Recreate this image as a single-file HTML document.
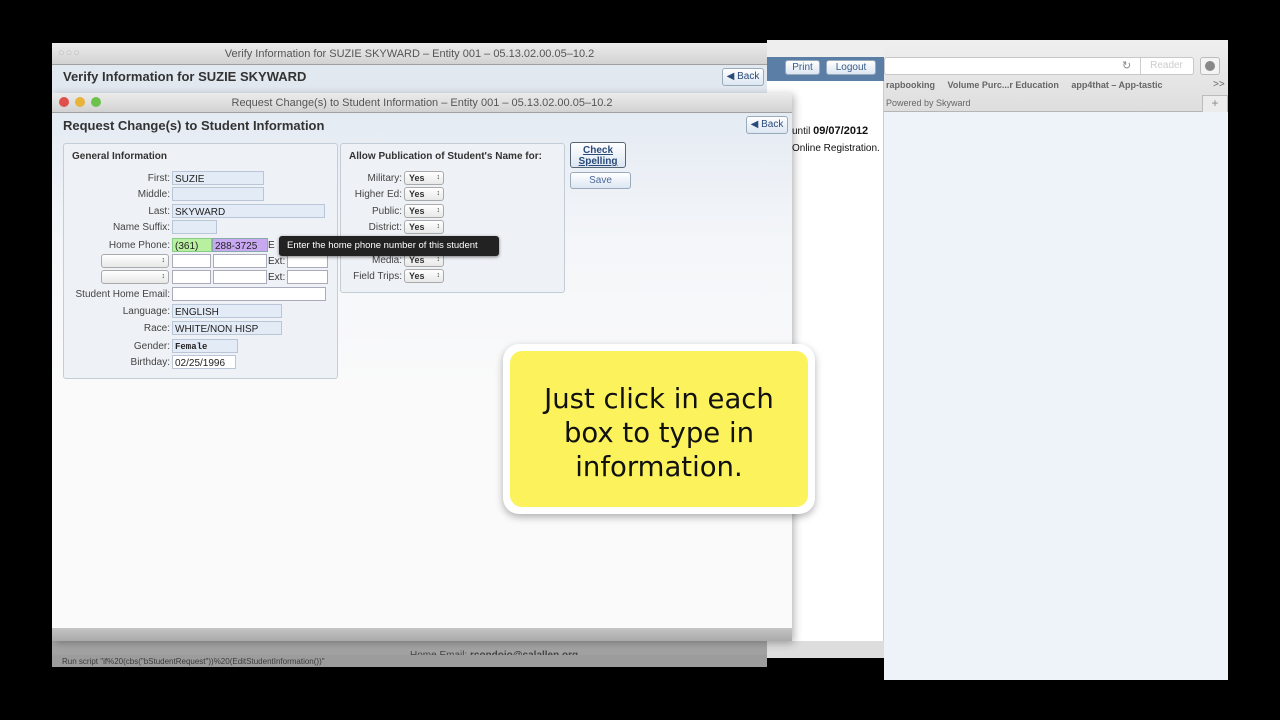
<!DOCTYPE html>
<html><head><meta charset="utf-8"><style>
*{margin:0;padding:0;box-sizing:border-box}
body{width:1280px;height:720px;background:#000;position:relative;overflow:hidden;font-family:"Liberation Sans",sans-serif;font-size:10px;color:#333}
.a{position:absolute}
.inp{position:absolute;height:14px;border:1px solid #b9c6d8;background:#e3ebf7;font-size:10px;line-height:13px;padding-top:1px;padding-left:2px;color:#222}
.w{background:#fff;border-color:#aab}
.lab{position:absolute;width:150px;text-align:right;font-size:10px;color:#444}
.sel{position:absolute;height:14px;border:1px solid #aaa;border-radius:3px;background:linear-gradient(#fff,#e8e8e8);font-size:9px;font-weight:bold;line-height:12px;padding-left:4px}
.sel:after{content:"\2195";position:absolute;right:3px;font-size:7px}
.btn{position:absolute;border:1px solid #9ab;border-radius:3px;background:linear-gradient(#fff,#dce6f2);color:#2a4a7a;text-align:center;font-size:10px}
.tb{background:linear-gradient(#ececec,#d2d2d2);border-bottom:1px solid #a0a0a0;color:#555;font-size:11px;text-align:center}
</style></head><body>
<div class="a" style="left:884px;top:40px;width:344px;height:640px;background:#eef3fa"></div>
<div class="a" style="left:884px;top:40px;width:344px;height:72px;background:linear-gradient(#efefef,#dedede);border-bottom:1px solid #b5b5b5"></div>
<div class="a" style="left:884px;top:57px;width:310px;height:18px;background:#fff;border:1px solid #c8c8c8;border-radius:3px"></div>
<div class="a" style="left:1122px;top:59px;font-size:11px;color:#888">&#8635;</div>
<div class="a" style="left:1140px;top:58px;width:52px;height:16px;border-left:1px solid #ccc;color:#ccc;font-size:10px;text-align:center;line-height:16px">Reader</div>
<div class="a" style="left:1200px;top:57px;width:20px;height:18px;border:1px solid #bbb;border-radius:3px;background:#f4f4f4"><div style="margin:3px auto;width:10px;height:10px;border-radius:50%;background:#888"></div></div>
<div class="a" style="left:886px;top:80px;font-size:9px;color:#666;font-weight:bold;white-space:nowrap">rapbooking&nbsp;&nbsp;&nbsp;&nbsp; Volume Purc...r Education&nbsp;&nbsp;&nbsp;&nbsp; app4that – App-tastic</div>
<div class="a" style="left:1213px;top:79px;font-size:10px;color:#666">&gt;&gt;</div>
<div class="a" style="left:886px;top:98px;font-size:9px;color:#666">Powered by Skyward</div>
<div class="a" style="left:1202px;top:95px;width:26px;height:17px;border:1px solid #bbb;border-bottom:none;text-align:center;color:#888;font-size:12px;background:#ececec">+</div>
<div class="a" style="left:767px;top:40px;width:117px;height:618px;background:#fff;border-right:1px solid #ccc"></div>
<div class="a" style="left:767px;top:40px;width:117px;height:17px;background:#eee"></div>
<div class="a" style="left:767px;top:57px;width:117px;height:24px;background:#5b7ea6"></div>
<div class="btn" style="left:785px;top:60px;width:35px;height:15px;line-height:13px;color:#3a5d8a">Print</div>
<div class="btn" style="left:826px;top:60px;width:50px;height:15px;line-height:13px;color:#3a5d8a">Logout</div>
<div class="a" style="left:792px;top:125px;font-size:10px;color:#111">until <b style="font-size:11px">09/07/2012</b></div>
<div class="a" style="left:792px;top:143px;font-size:10px;color:#111">Online Registration.</div>
<div class="a" style="left:767px;top:641px;width:117px;height:17px;background:#ddd"></div>
<div class="a" style="left:52px;top:43px;width:715px;height:624px;background:#e8ecf0"></div>
<div class="a tb" style="left:52px;top:43px;width:715px;height:22px;line-height:22px">Verify Information for SUZIE SKYWARD – Entity 001 – 05.13.02.00.05–10.2</div>
<div class="a" style="left:58px;top:47px;color:#bbb;font-size:11px;letter-spacing:1px">○○○</div>
<div class="a" style="left:52px;top:65px;width:715px;height:28px;background:#e2e8f0"></div>
<div class="a" style="left:63px;top:69px;font-size:13px;font-weight:bold;color:#333">Verify Information for SUZIE SKYWARD</div>
<div class="btn" style="left:722px;top:68px;width:42px;height:18px;line-height:16px">◀ Back</div>
<div class="a" style="left:52px;top:641px;width:715px;height:26px;background:linear-gradient(#a8a8a8,#9a9a9a);overflow:hidden">
<div class="a" style="left:358px;top:9px;font-size:10px;color:#444;white-space:nowrap">Home Email: <b>rcondojo@calallen.org</b></div></div>
<div class="a" style="left:52px;top:655px;width:715px;height:12px;background:#9c9c9c"></div>
<div class="a" style="left:62px;top:657px;font-size:8px;color:#3a3a3a">Run script "if%20(cbs("bStudentRequest"))%20(EditStudentInformation())"</div>
<div class="a" style="left:52px;top:93px;width:740px;height:548px;background:linear-gradient(#e2e9f2 0px,#f4f6f9 150px,#fafafa 300px);box-shadow:2px 2px 8px rgba(0,0,0,.3)"></div>
<div class="a tb" style="left:52px;top:93px;width:740px;height:20px;line-height:20px">Request Change(s) to Student Information – Entity 001 – 05.13.02.00.05–10.2</div>
<div class="a" style="left:59px;top:97px;width:10px;height:10px;border-radius:50%;background:#e0504a"></div>
<div class="a" style="left:75px;top:97px;width:10px;height:10px;border-radius:50%;background:#e8b33a"></div>
<div class="a" style="left:91px;top:97px;width:10px;height:10px;border-radius:50%;background:#6cc24a"></div>
<div class="a" style="left:63px;top:118px;font-size:13px;font-weight:bold;color:#333">Request Change(s) to Student Information</div>
<div class="btn" style="left:746px;top:116px;width:42px;height:18px;line-height:16px">◀ Back</div>
<div class="a" style="left:52px;top:628px;width:740px;height:13px;background:linear-gradient(#c4c4c4,#aaa)"></div>
<div class="a" style="left:63px;top:143px;width:275px;height:236px;border:1px solid #c4ccd6;border-radius:3px;background:#eef1f5"></div>
<div class="a" style="left:72px;top:151px;font-weight:bold;font-size:10px;color:#333">General Information</div>
<div class="lab" style="left:20px;top:173px">First:</div><div class="inp" style="left:172px;top:171px;width:92px">SUZIE</div>
<div class="lab" style="left:20px;top:189px">Middle:</div><div class="inp" style="left:172px;top:187px;width:92px"></div>
<div class="lab" style="left:20px;top:206px">Last:</div><div class="inp" style="left:172px;top:204px;width:153px">SKYWARD</div>
<div class="lab" style="left:20px;top:222px">Name Suffix:</div><div class="inp" style="left:172px;top:220px;width:45px"></div>
<div class="lab" style="left:20px;top:240px">Home Phone:</div>
<div class="inp" style="left:172px;top:238px;width:40px;background:#b8f0a0;border-color:#8c8">(361)</div>
<div class="inp" style="left:212px;top:238px;width:56px;background:#c9a8f2;border-color:#8aa">288-3725</div>
<div class="a" style="left:268px;top:240px">E</div>
<div class="sel" style="left:101px;top:254px;width:68px"></div><div class="inp w" style="left:172px;top:254px;width:39px"></div><div class="inp w" style="left:213px;top:254px;width:54px"></div><div class="a" style="left:268px;top:256px">Ext:</div><div class="inp w" style="left:287px;top:254px;width:41px"></div>
<div class="sel" style="left:101px;top:270px;width:68px"></div><div class="inp w" style="left:172px;top:270px;width:39px"></div><div class="inp w" style="left:213px;top:270px;width:54px"></div><div class="a" style="left:268px;top:272px">Ext:</div><div class="inp w" style="left:287px;top:270px;width:41px"></div>
<div class="lab" style="left:20px;top:289px">Student Home Email:</div><div class="inp w" style="left:172px;top:287px;width:154px"></div>
<div class="lab" style="left:20px;top:306px">Language:</div><div class="inp" style="left:172px;top:304px;width:110px">ENGLISH</div>
<div class="lab" style="left:20px;top:323px">Race:</div><div class="inp" style="left:172px;top:321px;width:110px">WHITE/NON HISP</div>
<div class="lab" style="left:20px;top:341px">Gender:</div><div class="inp" style="left:172px;top:339px;width:66px;font-family:'Liberation Mono',monospace;font-weight:bold;font-size:9px">Female</div>
<div class="lab" style="left:20px;top:357px">Birthday:</div><div class="inp" style="left:172px;top:355px;width:64px;background:#fff">02/25/1996</div>
<div class="a" style="left:340px;top:143px;width:225px;height:150px;border:1px solid #c4ccd6;border-radius:3px;background:#eef1f5"></div>
<div class="a" style="left:349px;top:151px;font-weight:bold;font-size:10px;color:#333">Allow Publication of Student's Name for:</div>
<div class="lab" style="left:252px;top:173px">Military:</div><div class="sel" style="left:404px;top:171px;width:40px">Yes</div>
<div class="lab" style="left:252px;top:189px">Higher Ed:</div><div class="sel" style="left:404px;top:187px;width:40px">Yes</div>
<div class="lab" style="left:252px;top:206px">Public:</div><div class="sel" style="left:404px;top:204px;width:40px">Yes</div>
<div class="lab" style="left:252px;top:222px">District:</div><div class="sel" style="left:404px;top:220px;width:40px">Yes</div>
<div class="lab" style="left:252px;top:255px">Media:</div><div class="sel" style="left:404px;top:253px;width:40px">Yes</div>
<div class="lab" style="left:252px;top:271px">Field Trips:</div><div class="sel" style="left:404px;top:269px;width:40px">Yes</div>
<div class="a" style="left:279px;top:236px;width:220px;height:20px;background:#222;border-radius:3px;color:#fff;font-size:9.5px;line-height:20px;padding-left:8px;box-shadow:0 1px 3px rgba(0,0,0,.5)">Enter the home phone number of this student</div>
<div class="btn" style="left:570px;top:142px;width:56px;height:26px;font-weight:bold;text-decoration:underline;line-height:11px;padding-top:2px;border-color:#567">Check<br>Spelling</div>
<div class="btn" style="left:570px;top:172px;width:61px;height:17px;line-height:15px;color:#4a6a9a">Save</div>
<div class="a" style="left:503px;top:344px;width:312px;height:170px;background:#fff;border-radius:16px;box-shadow:0 3px 8px rgba(0,0,0,.3)"></div>
<div class="a" style="left:510px;top:351px;width:298px;height:156px;background:#fbf25c;border-radius:12px;font-family:'DejaVu Sans',sans-serif;font-size:27.5px;line-height:34px;color:#111;text-align:center;padding-top:31px;white-space:nowrap">Just click in each<br>box to type in<br>information.</div>
</body></html>
